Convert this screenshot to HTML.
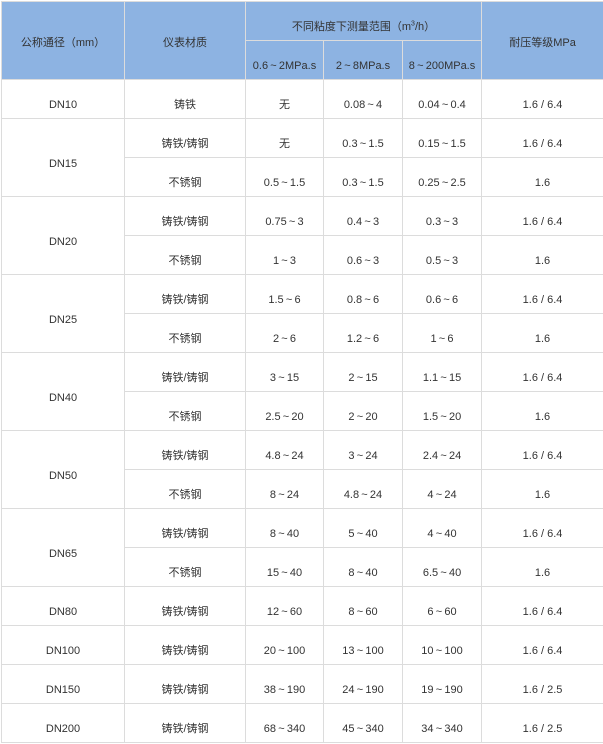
<!DOCTYPE html>
<html><head><meta charset="utf-8"><style>
html,body{margin:0;padding:0;background:#fff;width:603px;height:744px;overflow:hidden}
table{position:absolute;left:1px;top:1px;border-collapse:collapse;table-layout:fixed;width:602px;
font-family:"Liberation Sans","Noto Sans CJK SC",sans-serif;font-size:11px;color:#333}
td{border:1px solid #dcdcdc;text-align:center;vertical-align:middle;height:26px;padding:12px 0 0 0;white-space:nowrap;line-height:14px}
tr.h td{background:#8db3e2;border-color:#dcdcdc;color:#333}
tr.h td.r{padding-top:4px}
</style></head><body>
<table>
<colgroup><col style="width:123px"><col style="width:121px"><col style="width:78px"><col style="width:79px"><col style="width:79px"><col style="width:122px"></colgroup>
<tr class="h"><td rowspan="2" class="r">公称通径（mm）</td><td rowspan="2" class="r">仪表材质</td><td colspan="3">不同粘度下测量范围（m<sup style="font-size:7px;line-height:0">3</sup>/h）</td><td rowspan="2" class="r">耐压等级MPa</td></tr>
<tr class="h"><td>0.6&thinsp;~&thinsp;2MPa.s</td><td>2&thinsp;~&thinsp;8MPa.s</td><td>8&thinsp;~&thinsp;200MPa.s</td></tr>
<tr><td>DN10</td><td>铸铁</td><td>无</td><td>0.08&thinsp;~&thinsp;4</td><td>0.04&thinsp;~&thinsp;0.4</td><td>1.6 / 6.4</td></tr>
<tr><td rowspan="2">DN15</td><td>铸铁/铸钢</td><td>无</td><td>0.3&thinsp;~&thinsp;1.5</td><td>0.15&thinsp;~&thinsp;1.5</td><td>1.6 / 6.4</td></tr>
<tr><td>不锈钢</td><td>0.5&thinsp;~&thinsp;1.5</td><td>0.3&thinsp;~&thinsp;1.5</td><td>0.25&thinsp;~&thinsp;2.5</td><td>1.6</td></tr>
<tr><td rowspan="2">DN20</td><td>铸铁/铸钢</td><td>0.75&thinsp;~&thinsp;3</td><td>0.4&thinsp;~&thinsp;3</td><td>0.3&thinsp;~&thinsp;3</td><td>1.6 / 6.4</td></tr>
<tr><td>不锈钢</td><td>1&thinsp;~&thinsp;3</td><td>0.6&thinsp;~&thinsp;3</td><td>0.5&thinsp;~&thinsp;3</td><td>1.6</td></tr>
<tr><td rowspan="2">DN25</td><td>铸铁/铸钢</td><td>1.5&thinsp;~&thinsp;6</td><td>0.8&thinsp;~&thinsp;6</td><td>0.6&thinsp;~&thinsp;6</td><td>1.6 / 6.4</td></tr>
<tr><td>不锈钢</td><td>2&thinsp;~&thinsp;6</td><td>1.2&thinsp;~&thinsp;6</td><td>1&thinsp;~&thinsp;6</td><td>1.6</td></tr>
<tr><td rowspan="2">DN40</td><td>铸铁/铸钢</td><td>3&thinsp;~&thinsp;15</td><td>2&thinsp;~&thinsp;15</td><td>1.1&thinsp;~&thinsp;15</td><td>1.6 / 6.4</td></tr>
<tr><td>不锈钢</td><td>2.5&thinsp;~&thinsp;20</td><td>2&thinsp;~&thinsp;20</td><td>1.5&thinsp;~&thinsp;20</td><td>1.6</td></tr>
<tr><td rowspan="2">DN50</td><td>铸铁/铸钢</td><td>4.8&thinsp;~&thinsp;24</td><td>3&thinsp;~&thinsp;24</td><td>2.4&thinsp;~&thinsp;24</td><td>1.6 / 6.4</td></tr>
<tr><td>不锈钢</td><td>8&thinsp;~&thinsp;24</td><td>4.8&thinsp;~&thinsp;24</td><td>4&thinsp;~&thinsp;24</td><td>1.6</td></tr>
<tr><td rowspan="2">DN65</td><td>铸铁/铸钢</td><td>8&thinsp;~&thinsp;40</td><td>5&thinsp;~&thinsp;40</td><td>4&thinsp;~&thinsp;40</td><td>1.6 / 6.4</td></tr>
<tr><td>不锈钢</td><td>15&thinsp;~&thinsp;40</td><td>8&thinsp;~&thinsp;40</td><td>6.5&thinsp;~&thinsp;40</td><td>1.6</td></tr>
<tr><td>DN80</td><td>铸铁/铸钢</td><td>12&thinsp;~&thinsp;60</td><td>8&thinsp;~&thinsp;60</td><td>6&thinsp;~&thinsp;60</td><td>1.6 / 6.4</td></tr>
<tr><td>DN100</td><td>铸铁/铸钢</td><td>20&thinsp;~&thinsp;100</td><td>13&thinsp;~&thinsp;100</td><td>10&thinsp;~&thinsp;100</td><td>1.6 / 6.4</td></tr>
<tr><td>DN150</td><td>铸铁/铸钢</td><td>38&thinsp;~&thinsp;190</td><td>24&thinsp;~&thinsp;190</td><td>19&thinsp;~&thinsp;190</td><td>1.6 / 2.5</td></tr>
<tr><td>DN200</td><td>铸铁/铸钢</td><td>68&thinsp;~&thinsp;340</td><td>45&thinsp;~&thinsp;340</td><td>34&thinsp;~&thinsp;340</td><td>1.6 / 2.5</td></tr>
</table>
</body></html>
